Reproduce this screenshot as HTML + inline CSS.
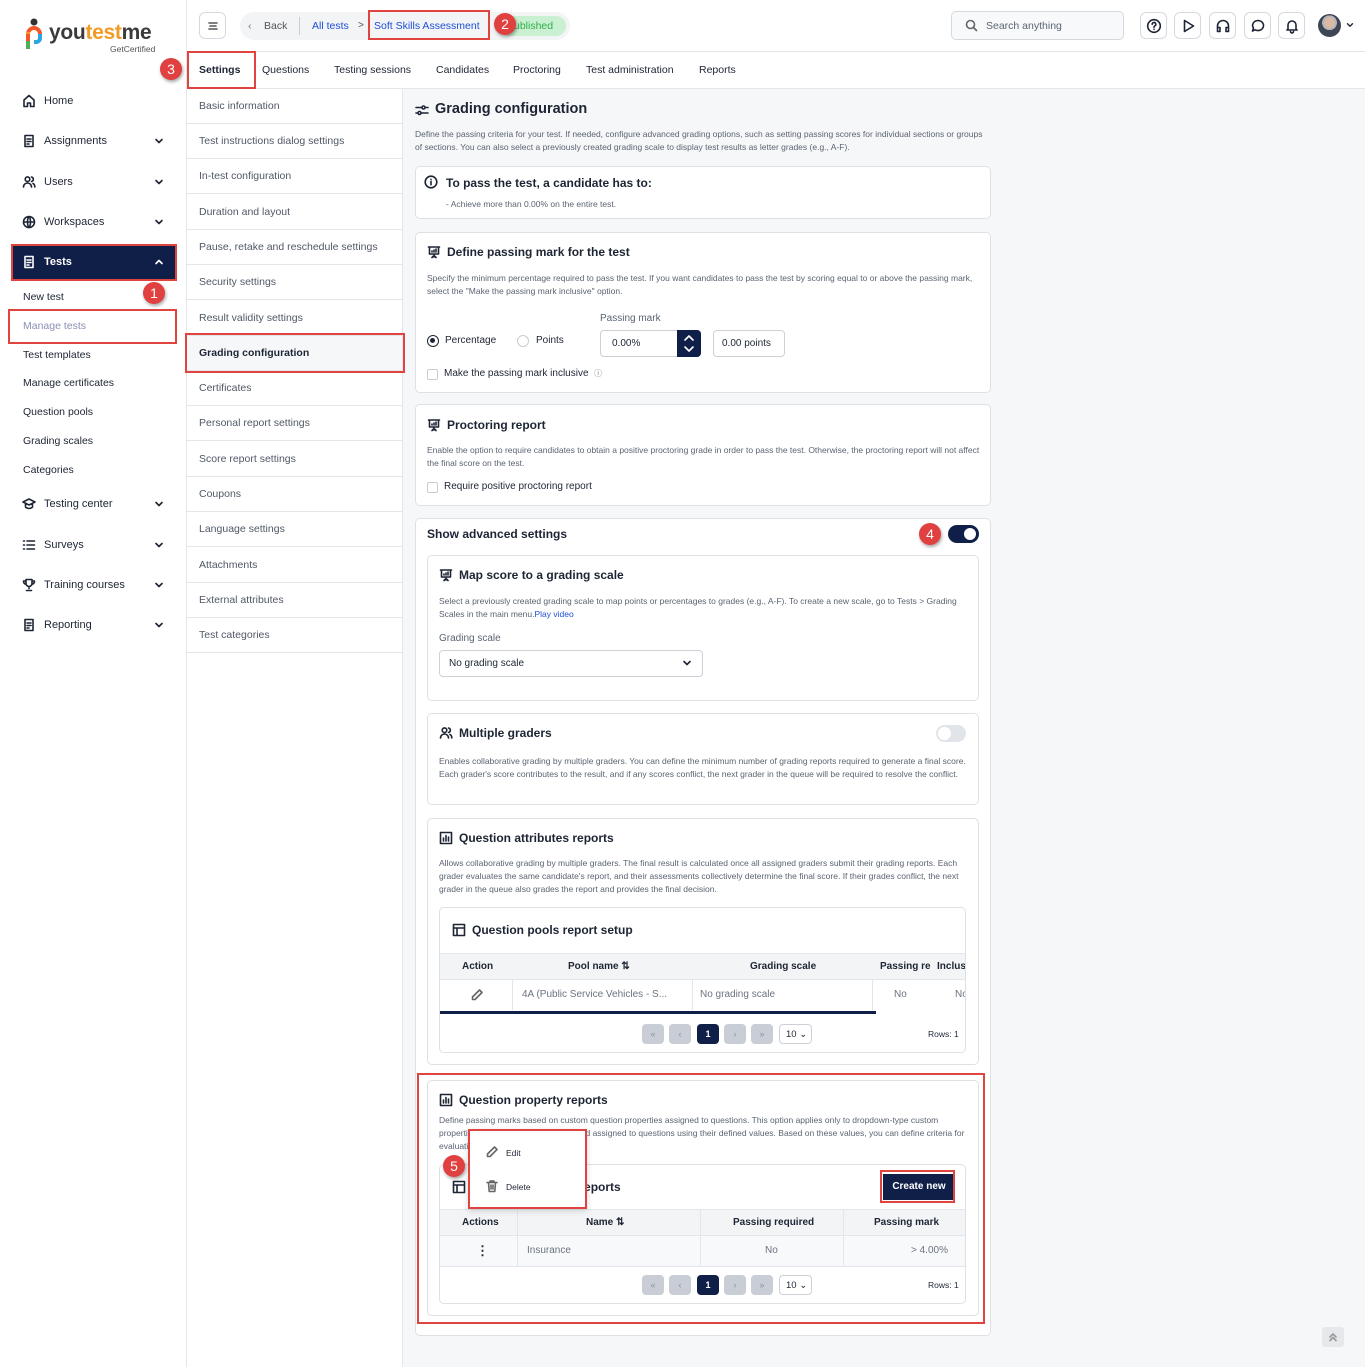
<!DOCTYPE html>
<html><head><meta charset="utf-8"><style>
*{box-sizing:border-box;margin:0;padding:0}
body{width:1365px;height:1367px;position:relative;font-family:"Liberation Sans",sans-serif;background:#f6f7f9;color:#1d2433;overflow:hidden}
.a{position:absolute}
svg{display:block}
.ic{fill:none;stroke:#1d2433;stroke-width:1.6;stroke-linecap:round;stroke-linejoin:round}
.side{left:0;top:0;width:187px;height:1367px;background:#fff;border-right:1px solid #e3e6ea}
.nav{left:44px;font-size:11px;color:#1d2433}
.ni{left:22px}
.chev{position:absolute;left:153px}
.sub{left:23px;font-size:10.5px;color:#1d2433}
.red{border:2px solid #e0443f}
.badge{width:22px;height:22px;border-radius:50%;background:#e0403f;color:#fff;font-size:14px;text-align:center;line-height:22px;box-shadow:1px 2px 3px rgba(0,0,0,.35)}
.topbar{left:187px;top:0;width:1178px;height:52px;background:#fff;border-bottom:1px solid #e3e6ea}
.tabs{left:187px;top:52px;width:1178px;height:37px;background:#fff;border-bottom:1px solid #e3e6ea}
.tab{top:64px;font-size:10.5px;color:#1d2433}
.menu{left:187px;top:89px;width:216px;height:1278px;background:#fff;border-right:1px solid #e3e6ea}
.mi{position:absolute;left:0;width:215px;height:35px;border-bottom:1px solid #e3e6ea;font-size:10.5px;color:#505866;padding:11px 0 0 12px}
.card{background:#fff;border:1px solid #dde1e6;border-radius:5px}
.h{font-size:12.5px;font-weight:bold;color:#1d2433}
.p{font-size:8.5px;color:#5b6472;line-height:13px}
.ib{width:27px;height:27px;border:1px solid #d5d9df;border-radius:6px;background:#fff;display:flex;align-items:center;justify-content:center}
.pg{width:22px;height:20px;border-radius:4px;background:#c9ced6;color:#8a93a0;font-size:9px;text-align:center;line-height:20px}
.th{font-size:10px;font-weight:bold;color:#1d2433}
.td{font-size:10px;color:#6b7380}
</style></head><body>
<svg width="0" height="0" style="position:absolute">
<defs>
<symbol id="chev" viewBox="0 0 12 12"><path class="ic" d="M3 4.5l3 3 3-3"/></symbol>
<symbol id="doc" viewBox="0 0 14 14"><path class="ic" d="M3 1.5h8v11H3z M5 5h4 M5 7.5h4 M5 10h2"/></symbol>
<symbol id="pres" viewBox="0 0 14 14"><path class="ic" d="M1.5 2h11 M2.5 2v7h9V2 M7 9v3 M5 12.5l2-2 2 2 M5 7V6 M7 7V5 M9 7V4"/></symbol>
<symbol id="tbl" viewBox="0 0 14 14"><path class="ic" d="M1.5 1.5h11v11h-11z M1.5 5h11 M5 5v7.5"/></symbol>
<symbol id="bar" viewBox="0 0 14 14"><path class="ic" d="M1.5 1.5h11v11h-11z M4.5 10V7 M7 10V4.5 M9.5 10V6"/></symbol>
</defs></svg>
<div class="a side"></div>
<!-- logo -->
<svg class="a" style="left:24px;top:17px" width="22" height="36" viewBox="0 0 22 36"><circle cx="10" cy="5" r="3.5" fill="#333"/><path d="M4 30V17a6 6 0 0 1 12 0" fill="none" stroke="#f2562a" stroke-width="4"/><path d="M16 17v4a4 4 0 0 1-4 4h-2" fill="none" stroke="#2aa6e0" stroke-width="4"/><path d="M4 24v8" stroke="#4cb050" stroke-width="4"/><path d="M4 17v-2" stroke="#f29b24" stroke-width="4"/></svg>
<div class="a" style="left:49px;top:21px;font-size:21px;font-weight:bold;color:#3a3a3a;letter-spacing:-.3px">you<span style="color:#f29b24">test</span>me</div>
<div class="a" style="left:110px;top:44px;font-size:8.5px;color:#555">GetCertified</div>

<svg class="a ni" style="top:94px" width="14" height="14" viewBox="0 0 14 14"><path class="ic" d="M2 12.5V6l5-4.5L12 6v6.5H8.5V9h-3v3.5z"/></svg><div class="a nav" style="top:95px">Home</div>
<svg class="a ni" style="top:134px" width="14" height="14"><use href="#doc"/></svg><div class="a nav" style="top:135px">Assignments</div><svg class="chev" style="top:135px" width="12" height="12"><use href="#chev"/></svg>
<svg class="a ni" style="top:175px" width="14" height="14" viewBox="0 0 14 14"><path class="ic" d="M1.5 12c0-2.5 2-4 4-4s4 1.5 4 4 M5.5 6.5a2.3 2.3 0 1 0 0-4.6 2.3 2.3 0 0 0 0 4.6z M9.5 2a2.3 2.3 0 0 1 0 4.5 M11 8.5c1 .5 1.8 1.8 1.8 3.5"/></svg><div class="a nav" style="top:176px">Users</div><svg class="chev" style="top:176px" width="12" height="12"><use href="#chev"/></svg>
<svg class="a ni" style="top:215px" width="14" height="14" viewBox="0 0 14 14"><path class="ic" d="M7 1.5a5.5 5.5 0 1 0 0 11 5.5 5.5 0 0 0 0-11z M1.5 7h11 M7 1.5c2 2 2 9 0 11 M7 1.5c-2 2-2 9 0 11"/></svg><div class="a nav" style="top:216px">Workspaces</div><svg class="chev" style="top:216px" width="12" height="12"><use href="#chev"/></svg>
<div class="a" style="left:11px;top:244px;width:166px;height:37px;background:#101f48;border:2px solid #e0443f"></div>
<svg class="a ni" style="top:255px" width="14" height="14" viewBox="0 0 14 14"><path class="ic" style="stroke:#fff" d="M3 1.5h8v11H3z M5 5h4 M5 7.5h4 M5 10h2"/></svg>
<div class="a nav" style="top:256px;color:#fff;font-weight:bold">Tests</div>
<svg class="a" style="left:153px;top:256px" width="12" height="12" viewBox="0 0 12 12"><path class="ic" style="stroke:#fff" d="M3 7.5l3-3 3 3"/></svg>
<div class="a sub" style="top:291px">New test</div>
<div class="a badge" style="left:143px;top:282px">1</div>
<div class="a red" style="left:8px;top:309px;width:169px;height:35px"></div>
<div class="a sub" style="top:320px;color:#8a8fb5">Manage tests</div>
<div class="a sub" style="top:349px">Test templates</div>
<div class="a sub" style="top:377px">Manage certificates</div>
<div class="a sub" style="top:406px">Question pools</div>
<div class="a sub" style="top:435px">Grading scales</div>
<div class="a sub" style="top:464px">Categories</div>
<svg class="a ni" style="top:497px" width="14" height="14" viewBox="0 0 14 14"><path class="ic" d="M1 5l6-3 6 3-6 3z M3.5 6.5v3.5c1 1 2.2 1.5 3.5 1.5s2.5-.5 3.5-1.5V6.5"/></svg><div class="a nav" style="top:498px">Testing center</div><svg class="chev" style="top:498px" width="12" height="12"><use href="#chev"/></svg>
<svg class="a ni" style="top:538px" width="14" height="14" viewBox="0 0 14 14"><path class="ic" d="M1.5 3h1 M5 3h7.5 M1.5 7h1 M5 7h7.5 M1.5 11h1 M5 11h7.5"/></svg><div class="a nav" style="top:539px">Surveys</div><svg class="chev" style="top:539px" width="12" height="12"><use href="#chev"/></svg>
<svg class="a ni" style="top:578px" width="14" height="14" viewBox="0 0 14 14"><path class="ic" d="M4 1.5h6v4a3 3 0 0 1-6 0z M4 3H1.5c0 2 1 3 2.7 3.3 M10 3h2.5c0 2-1 3-2.7 3.3 M7 8.5v2 M4.5 12.5h5"/></svg><div class="a nav" style="top:579px">Training courses</div><svg class="chev" style="top:579px" width="12" height="12"><use href="#chev"/></svg>
<svg class="a ni" style="top:618px" width="14" height="14"><use href="#doc"/></svg><div class="a nav" style="top:619px">Reporting</div><svg class="chev" style="top:619px" width="12" height="12"><use href="#chev"/></svg>

<!-- top bar -->
<div class="a topbar"></div>
<div class="a ib" style="left:199px;top:12px"><svg width="14" height="14" viewBox="0 0 14 14"><path class="ic" style="stroke:#555" d="M3 4h8 M4 7h6 M3 10h8"/></svg></div>
<div class="a" style="left:240px;top:12px;width:330px;height:28px;background:#f3f4f6;border-radius:14px"></div>
<div class="a" style="left:248px;top:20px;font-size:10.5px;color:#777">‹</div>
<div class="a" style="left:264px;top:20px;font-size:10.5px;color:#555">Back</div>
<div class="a" style="left:299px;top:17px;width:1px;height:18px;background:#ccc"></div>
<div class="a" style="left:312px;top:20px;font-size:10.5px;color:#1d4fd8">All tests</div>
<div class="a" style="left:358px;top:20px;font-size:10px;color:#555">&gt;</div>
<div class="a" style="left:500px;top:16px;width:66px;height:20px;background:#c9f0d0;border-radius:10px;font-size:10.5px;color:#2fae4a;padding:4px 0 0 14px">ublished</div>
<div class="a red" style="left:368px;top:10px;width:122px;height:30px"></div>
<div class="a" style="left:374px;top:20px;font-size:10.5px;color:#1d4fd8">Soft Skills Assessment</div>
<div class="a badge" style="left:494px;top:13px">2</div>
<div class="a" style="left:951px;top:11px;width:173px;height:29px;border:1px solid #d5d9df;border-radius:5px;background:#f8f9fa;font-size:10.5px;color:#5b6472;padding:8px 0 0 34px">Search anything</div>
<svg class="a" style="left:965px;top:19px" width="13" height="13" viewBox="0 0 13 13"><path class="ic" style="stroke:#666" d="M5.5 1.5a4 4 0 1 0 0 8 4 4 0 0 0 0-8z M8.5 8.5l3 3"/></svg>
<div class="a ib" style="left:1140px;top:12px"><svg width="16" height="16" viewBox="0 0 16 16"><circle class="ic" cx="8" cy="8" r="6.3"/><path class="ic" d="M6.2 6.3a1.8 1.8 0 1 1 2.6 1.6c-.6.3-.8.7-.8 1.3 M8 11.2v.1"/></svg></div>
<div class="a ib" style="left:1174px;top:12px"><svg width="16" height="16" viewBox="0 0 16 16"><path class="ic" d="M4.5 2.5v11l9-5.5z"/></svg></div>
<div class="a ib" style="left:1209px;top:12px"><svg width="16" height="16" viewBox="0 0 16 16"><path class="ic" d="M2.5 11V8a5.5 5.5 0 0 1 11 0v3 M2.5 9.5h2.5v4H2.5z M11 9.5h2.5v4H11z"/></svg></div>
<div class="a ib" style="left:1244px;top:12px"><svg width="16" height="16" viewBox="0 0 16 16"><path class="ic" d="M8 2.5a5.5 5 0 1 1-2.8 9.3L2.5 13l1-2.8A5.5 5 0 0 1 8 2.5z"/></svg></div>
<div class="a ib" style="left:1278px;top:12px"><svg width="16" height="16" viewBox="0 0 16 16"><path class="ic" d="M4 11V7a4 4 0 0 1 8 0v4l1 1H3z M6.5 13.5a1.5 1.5 0 0 0 3 0"/></svg></div>
<div class="a" style="left:1318px;top:14px;width:23px;height:23px;border-radius:50%;background:radial-gradient(circle at 50% 38%,#d9b8a4 0 30%,#b0b4bc 31% 40%,#3e4656 41%)"></div>
<svg class="a" style="left:1345px;top:20px" width="10" height="10"><use href="#chev"/></svg>

<!-- tabs -->
<div class="a tabs"></div>
<div class="a red" style="left:187px;top:51px;width:69px;height:38px"></div>
<div class="a tab" style="left:199px;font-weight:bold">Settings</div>
<div class="a badge" style="left:160px;top:58px">3</div>
<div class="a tab" style="left:262px">Questions</div>
<div class="a tab" style="left:334px">Testing sessions</div>
<div class="a tab" style="left:436px">Candidates</div>
<div class="a tab" style="left:513px">Proctoring</div>
<div class="a tab" style="left:586px">Test administration</div>
<div class="a tab" style="left:699px">Reports</div>

<!-- settings menu -->
<div class="a menu">
<div class="mi" style="top:0">Basic information</div>
<div class="mi" style="top:35px">Test instructions dialog settings</div>
<div class="mi" style="top:70px">In-test configuration</div>
<div class="mi" style="top:106px">Duration and layout</div>
<div class="mi" style="top:141px">Pause, retake and reschedule settings</div>
<div class="mi" style="top:176px">Security settings</div>
<div class="mi" style="top:212px">Result validity settings</div>
<div class="mi" style="top:247px;background:#f6f7f9;color:#1d2433;font-weight:bold">Grading configuration</div>
<div class="mi" style="top:282px">Certificates</div>
<div class="mi" style="top:317px">Personal report settings</div>
<div class="mi" style="top:353px">Score report settings</div>
<div class="mi" style="top:388px">Coupons</div>
<div class="mi" style="top:423px">Language settings</div>
<div class="mi" style="top:459px">Attachments</div>
<div class="mi" style="top:494px">External attributes</div>
<div class="mi" style="top:529px">Test categories</div>
</div>
<div class="a red" style="left:185px;top:333px;width:220px;height:40px"></div>

<!-- main -->
<svg class="a" style="left:415px;top:103px" width="14" height="14" viewBox="0 0 14 14"><path class="ic" d="M1 4.5h6 M10 4.5h3 M8.5 3a1.5 1.5 0 1 0 0 3 1.5 1.5 0 0 0 0-3z M1 10h2 M6 10h7 M4.5 8.5a1.5 1.5 0 1 0 0 3 1.5 1.5 0 0 0 0-3z"/></svg>
<div class="a" style="left:435px;top:101px;font-size:14.5px;font-weight:bold">Grading configuration</div>
<div class="a p" style="left:415px;top:128px;width:570px">Define the passing criteria for your test. If needed, configure advanced grading options, such as setting passing scores for individual sections or groups of sections. You can also select a previously created grading scale to display test results as letter grades (e.g., A-F).</div>

<div class="a card" style="left:415px;top:166px;width:576px;height:53px"></div>
<svg class="a" style="left:424px;top:175px" width="14" height="14" viewBox="0 0 14 14"><circle class="ic" cx="7" cy="7" r="5.8"/><path class="ic" d="M7 6.3v3.5 M7 4.3v.1"/></svg>
<div class="a h" style="left:446px;top:176px;font-size:12px">To pass the test, a candidate has to:</div>
<div class="a p" style="left:446px;top:198px">- Achieve more than 0.00% on the entire test.</div>

<div class="a card" style="left:415px;top:232px;width:576px;height:161px"></div>
<svg class="a" style="left:427px;top:245px" width="14" height="14"><use href="#pres"/></svg>
<div class="a h" style="left:447px;top:245px;font-size:12px">Define passing mark for the test</div>
<div class="a p" style="left:427px;top:272px;width:550px">Specify the minimum percentage required to pass the test. If you want candidates to pass the test by scoring equal to or above the passing mark, select the "Make the passing mark inclusive" option.</div>
<div class="a" style="left:600px;top:313px;font-size:10px;color:#5b6472">Passing mark</div>
<div class="a" style="left:427px;top:335px;width:12px;height:12px;border:1.5px solid #1d2433;border-radius:50%"><div style="margin:2px;width:5px;height:5px;border-radius:50%;background:#1d2433"></div></div>
<div class="a" style="left:445px;top:335px;font-size:10px">Percentage</div>
<div class="a" style="left:517px;top:335px;width:12px;height:12px;border:1px solid #ccc;border-radius:50%"></div>
<div class="a" style="left:536px;top:335px;font-size:10px">Points</div>
<div class="a" style="left:600px;top:330px;width:101px;height:27px;border:1px solid #ccd1d8;border-radius:4px;font-size:10px;padding:7px 0 0 11px">0.00%</div>
<div class="a" style="left:677px;top:330px;width:24px;height:27px;background:#101f48;border-radius:0 4px 4px 0"></div>
<svg class="a" style="left:682px;top:332px" width="14" height="23" viewBox="0 0 14 23"><path class="ic" style="stroke:#fff" d="M3 8l4-4 4 4 M3 15l4 4 4-4"/></svg>
<div class="a" style="left:713px;top:330px;width:72px;height:27px;border:1px solid #ccd1d8;border-radius:4px;font-size:10px;padding:7px 0 0 8px">0.00 points</div>
<div class="a" style="left:427px;top:369px;width:11px;height:11px;border:1px solid #ccc;border-radius:2px"></div>
<div class="a" style="left:444px;top:368px;font-size:10px">Make the passing mark inclusive &nbsp;<span style="font-size:8px;color:#777">ⓘ</span></div>

<div class="a card" style="left:415px;top:404px;width:576px;height:102px"></div>
<svg class="a" style="left:427px;top:418px" width="14" height="14"><use href="#pres"/></svg>
<div class="a h" style="left:447px;top:418px;font-size:12px">Proctoring report</div>
<div class="a p" style="left:427px;top:444px;width:560px">Enable the option to require candidates to obtain a positive proctoring grade in order to pass the test. Otherwise, the proctoring report will not affect the final score on the test.</div>
<div class="a" style="left:427px;top:482px;width:11px;height:11px;border:1px solid #ccc;border-radius:2px"></div>
<div class="a" style="left:444px;top:481px;font-size:10px">Require positive proctoring report</div>

<div class="a card" style="left:415px;top:518px;width:576px;height:818px"></div>
<div class="a h" style="left:427px;top:527px;font-size:12px">Show advanced settings</div>
<div class="a badge" style="left:919px;top:523px">4</div>
<div class="a" style="left:948px;top:525px;width:31px;height:18px;border-radius:9px;background:#101f48"><div style="margin:3px 0 0 16px;width:12px;height:12px;border-radius:50%;background:#fff"></div></div>

<div class="a card" style="left:427px;top:555px;width:552px;height:146px"></div>
<svg class="a" style="left:439px;top:568px" width="14" height="14"><use href="#pres"/></svg>
<div class="a h" style="left:459px;top:568px;font-size:12px">Map score to a grading scale</div>
<div class="a p" style="left:439px;top:595px;width:535px">Select a previously created grading scale to map points or percentages to grades (e.g., A-F). To create a new scale, go to Tests &gt; Grading Scales in the main menu.<span style="color:#1d4fd8">Play video</span></div>
<div class="a" style="left:439px;top:633px;font-size:10px;color:#5b6472">Grading scale</div>
<div class="a" style="left:439px;top:650px;width:264px;height:27px;border:1px solid #ccd1d8;border-radius:4px;font-size:10px;padding:7px 0 0 9px">No grading scale</div>
<svg class="a" style="left:681px;top:657px" width="12" height="12"><use href="#chev"/></svg>

<div class="a card" style="left:427px;top:713px;width:552px;height:92px"></div>
<svg class="a" style="left:439px;top:726px" width="14" height="14" viewBox="0 0 14 14"><path class="ic" d="M1.5 12c0-2.5 2-4 4-4s4 1.5 4 4 M5.5 6.5a2.3 2.3 0 1 0 0-4.6 2.3 2.3 0 0 0 0 4.6z M9.5 2a2.3 2.3 0 0 1 0 4.5 M11 8.5c1 .5 1.8 1.8 1.8 3.5"/></svg>
<div class="a h" style="left:459px;top:726px;font-size:12px">Multiple graders</div>
<div class="a" style="left:936px;top:725px;width:30px;height:17px;border-radius:9px;background:#e1e4e8"><div style="margin:2px 0 0 2px;width:13px;height:13px;border-radius:50%;background:#fff"></div></div>
<div class="a p" style="left:439px;top:755px;width:532px">Enables collaborative grading by multiple graders. You can define the minimum number of grading reports required to generate a final score. Each grader's score contributes to the result, and if any scores conflict, the next grader in the queue will be required to resolve the conflict.</div>

<div class="a card" style="left:427px;top:818px;width:552px;height:247px"></div>
<svg class="a" style="left:439px;top:831px" width="14" height="14"><use href="#bar"/></svg>
<div class="a h" style="left:459px;top:831px;font-size:12px">Question attributes reports</div>
<div class="a p" style="left:439px;top:857px;width:532px">Allows collaborative grading by multiple graders. The final result is calculated once all assigned graders submit their grading reports. Each grader evaluates the same candidate's report, and their assessments collectively determine the final score. If their grades conflict, the next grader in the queue also grades the report and provides the final decision.</div>
<div class="a card" style="left:439px;top:907px;width:527px;height:146px;overflow:hidden">
 <svg class="a" style="left:12px;top:15px" width="14" height="14"><use href="#tbl"/></svg>
 <div class="a h" style="left:32px;top:15px;font-size:12px">Question pools report setup</div>
 <div class="a" style="left:0;top:45px;width:527px;height:27px;background:#f3f4f6;border-top:1px solid #e3e6ea;border-bottom:1px solid #e3e6ea"></div>
 <div class="a th" style="left:22px;top:53px">Action</div>
 <div class="a th" style="left:128px;top:53px">Pool name ⇅</div>
 <div class="a th" style="left:310px;top:53px">Grading scale</div>
 <div class="a th" style="left:440px;top:53px">Passing re</div>
 <div class="a th" style="left:497px;top:53px">Inclus</div>
 <svg class="a" style="left:30px;top:80px" width="14" height="14" viewBox="0 0 14 14"><path class="ic" style="stroke:#666" d="M9.5 2l2.5 2.5-7 7H2.5V9z"/></svg>
 <div class="a td" style="left:82px;top:81px">4A (Public Service Vehicles - S...</div>
 <div class="a td" style="left:260px;top:81px">No grading scale</div>
 <div class="a td" style="left:454px;top:81px">No</div>
 <div class="a td" style="left:515px;top:81px">No</div>
 <div class="a" style="left:72px;top:72px;width:1px;height:30px;background:#e3e6ea"></div>
 <div class="a" style="left:252px;top:72px;width:1px;height:30px;background:#e3e6ea"></div>
 <div class="a" style="left:432px;top:72px;width:1px;height:30px;background:#e3e6ea"></div>
 <div class="a" style="left:0;top:103px;width:436px;height:3px;background:#101f48"></div>
 <div class="a pg" style="left:202px;top:116px">«</div><div class="a pg" style="left:229px;top:116px">‹</div>
 <div class="a pg" style="left:257px;top:116px;background:#101f48;color:#fff;font-weight:bold">1</div>
 <div class="a pg" style="left:284px;top:116px">›</div><div class="a pg" style="left:311px;top:116px">»</div>
 <div class="a" style="left:339px;top:116px;width:33px;height:20px;border:1px solid #ccd1d8;border-radius:4px;font-size:9.5px;padding:4px 0 0 6px">10 ⌄</div>
 <div class="a" style="left:488px;top:121px;font-size:8.5px">Rows: 1</div>
</div>

<div class="a card" style="left:427px;top:1080px;width:552px;height:236px"></div>
<svg class="a" style="left:439px;top:1093px" width="14" height="14"><use href="#bar"/></svg>
<div class="a h" style="left:459px;top:1093px;font-size:12px">Question property reports</div>
<div class="a p" style="left:439px;top:1114px;width:532px">Define passing marks based on custom question properties assigned to questions. This option applies only to dropdown-type custom properties created in the application and assigned to questions using their defined values. Based on these values, you can define criteria for evaluating candidate performance.</div>
<div class="a card" style="left:439px;top:1164px;width:527px;height:140px;overflow:hidden">
 <svg class="a" style="left:12px;top:15px" width="14" height="14"><use href="#tbl"/></svg>
 <div class="a h" style="left:32px;top:15px;font-size:12px">Question property reports</div>
 <div class="a" style="left:443px;top:9px;width:72px;height:26px;background:#101f48;color:#fff;font-size:10px;font-weight:bold;text-align:center;line-height:26px">Create new</div>
 <div class="a" style="left:0;top:44px;width:527px;height:27px;background:#f3f4f6;border-top:1px solid #e3e6ea;border-bottom:1px solid #e3e6ea"></div>
 <div class="a th" style="left:22px;top:52px">Actions</div>
 <div class="a th" style="left:146px;top:52px">Name ⇅</div>
 <div class="a th" style="left:293px;top:52px">Passing required</div>
 <div class="a th" style="left:434px;top:52px">Passing mark</div>
 <div class="a" style="left:0;top:71px;width:527px;height:31px;background:#f8f9fa;border-bottom:1px solid #e3e6ea"></div>
 <div class="a" style="left:36px;top:78px;font-size:13px;font-weight:bold">⋮</div>
 <div class="a td" style="left:87px;top:80px">Insurance</div>
 <div class="a td" style="left:325px;top:80px">No</div>
 <div class="a td" style="left:471px;top:80px">&gt; 4.00%</div>
 <div class="a" style="left:77px;top:44px;width:1px;height:58px;background:#e3e6ea"></div>
 <div class="a" style="left:260px;top:44px;width:1px;height:58px;background:#e3e6ea"></div>
 <div class="a" style="left:403px;top:44px;width:1px;height:58px;background:#e3e6ea"></div>
 <div class="a pg" style="left:202px;top:110px">«</div><div class="a pg" style="left:229px;top:110px">‹</div>
 <div class="a pg" style="left:257px;top:110px;background:#101f48;color:#fff;font-weight:bold">1</div>
 <div class="a pg" style="left:284px;top:110px">›</div><div class="a pg" style="left:311px;top:110px">»</div>
 <div class="a" style="left:339px;top:110px;width:33px;height:20px;border:1px solid #ccd1d8;border-radius:4px;font-size:9.5px;padding:4px 0 0 6px">10 ⌄</div>
 <div class="a" style="left:488px;top:115px;font-size:8.5px">Rows: 1</div>
</div>
<div class="a red" style="left:880px;top:1170px;width:75px;height:33px"></div>
<!-- popup -->
<div class="a" style="left:468px;top:1129px;width:119px;height:80px;background:#fff;border:2px solid #e0443f;box-shadow:0 2px 6px rgba(0,0,0,.15)"></div>
<svg class="a" style="left:485px;top:1145px" width="14" height="14" viewBox="0 0 14 14"><path class="ic" style="stroke:#666" d="M9.5 2l2.5 2.5-7 7H2.5V9z"/></svg>
<div class="a" style="left:506px;top:1148px;font-size:8.5px">Edit</div>
<svg class="a" style="left:485px;top:1179px" width="14" height="14" viewBox="0 0 14 14"><path class="ic" style="stroke:#666" d="M2 3.5h10 M5 3.5V2h4v1.5 M3.5 3.5l.7 9h5.6l.7-9 M6 6v4 M8 6v4"/></svg>
<div class="a" style="left:506px;top:1182px;font-size:8.5px">Delete</div>
<div class="a badge" style="left:443px;top:1155px">5</div>
<div class="a red" style="left:417px;top:1073px;width:568px;height:251px"></div>

<div class="a" style="left:1322px;top:1327px;width:22px;height:20px;background:#e6e8eb;border-radius:3px"></div>
<svg class="a" style="left:1327px;top:1331px" width="12" height="12" viewBox="0 0 12 12"><path class="ic" style="stroke:#999" d="M3 6l3-3 3 3 M3 9.5l3-3 3 3"/></svg>
</body></html>
